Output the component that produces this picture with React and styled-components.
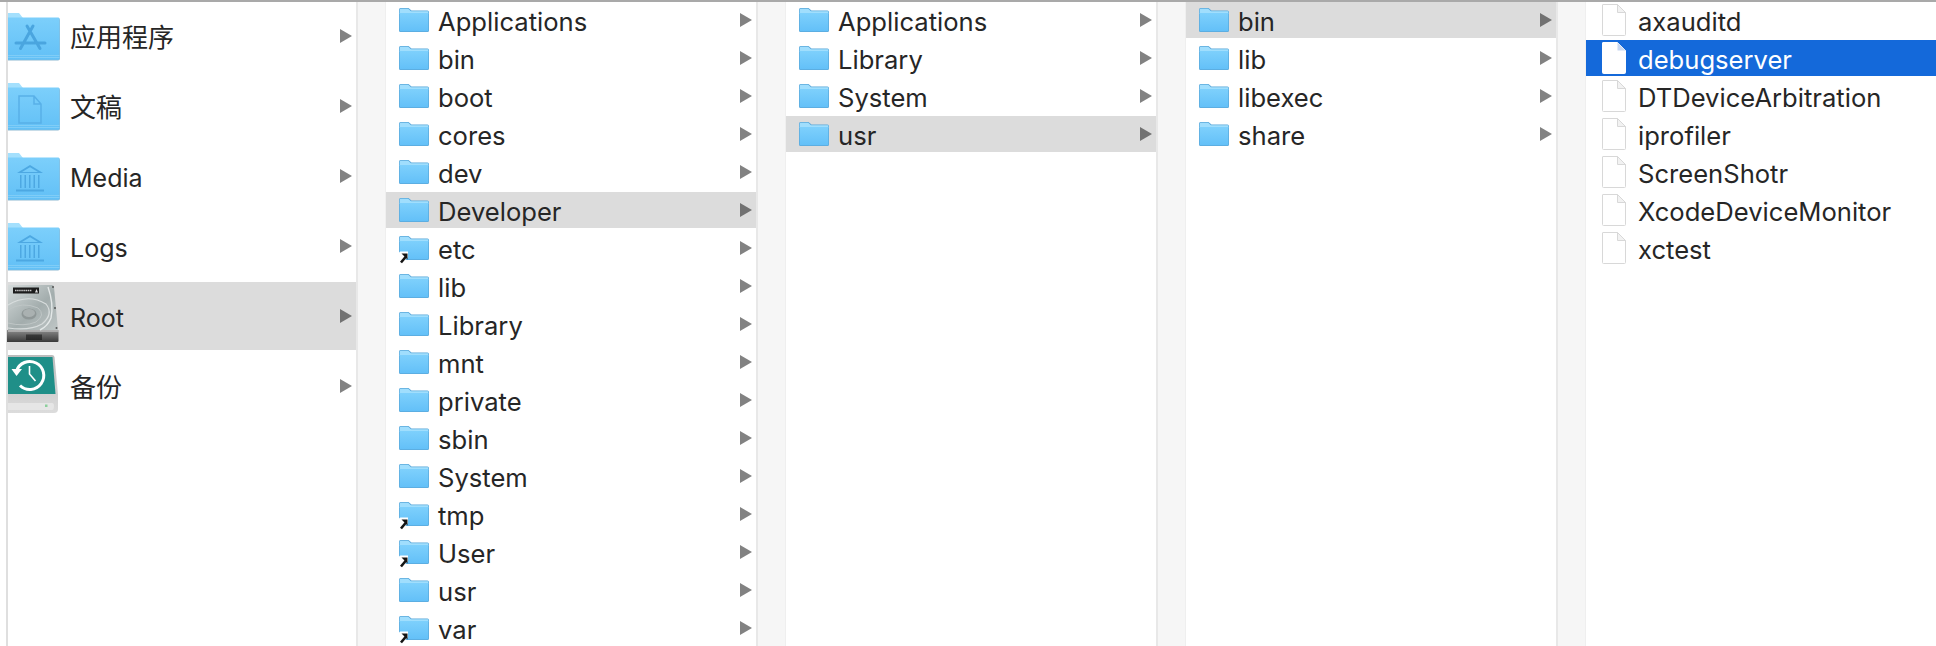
import React from 'react'
import styled, { createGlobalStyle } from 'styled-components'

const GlobalStyle = createGlobalStyle`
  html, body {
    margin: 0;
    padding: 0;
    background: #fff;
  }
`

const Browser = styled.div`
  display: flex;
  height: 644px;
  overflow: hidden;
  border-top: 2px solid #a9a9a9;
  font-family: Inter, "Noto Sans CJK SC", sans-serif;
  color: #262626;
`

const Gutter = styled.div`
  flex: none;
  box-sizing: border-box;
  width: ${(p) => (p.$edge ? 8 : 30)}px;
  background: ${(p) => (p.$edge ? '#fff' : '#f6f6f6')};
  border-left: ${(p) => (p.$edge ? 'none' : '2px solid #e8e8e8')};
  border-right: ${(p) => (p.$edge ? '2px solid #dfdfdf' : '1px solid #efefef')};
`

const Column = styled.div`
  flex: ${(p) => (p.$width ? 'none' : '1')};
  width: ${(p) => (p.$width ? `${p.$width}px` : 'auto')};
  display: flex;
  flex-direction: column;
  gap: 2px;
  background: #fff;
`

const Row = styled.div`
  flex: none;
  display: flex;
  align-items: center;
  height: ${(p) => (p.$large ? 68 : 36)}px;
  padding: ${(p) => (p.$large ? '0 4px 0 0' : '0 4px 0 13px')};
  gap: ${(p) => (p.$large ? 10 : 9)}px;
  background: ${(p) => (p.$state === 'open' ? '#dcdcdc' : p.$state === 'selected' ? '#1469da' : 'transparent')};
  color: ${(p) => (p.$state === 'selected' ? '#fff' : 'inherit')};
`

const Name = styled.span`
  font-size: ${(p) => (p.$cjk ? 26 : p.$large ? 25 : 25.6)}px;
  line-height: 30px;
  padding-top: ${(p) => (p.$large ? 4 : 3)}px;
  white-space: nowrap;
`

const Chevron = styled.i`
  margin-left: auto;
  width: 0;
  height: 0;
  border-left: 12px solid ${(p) => (p.$dark ? '#727272' : '#828282')};
  border-top: 7px solid transparent;
  border-bottom: 7px solid transparent;
`

const IconSvg = styled.svg`
  flex: none;
  display: block;
  overflow: visible;
`

const IconSlot = styled.span`
  flex: none;
  display: flex;
  justify-content: center;
  width: 30px;
`

function Folder({ link }) {
  return (
    <IconSvg width="30" height="24" viewBox="0 0 30 24">
      <defs>
        <linearGradient id="smallFolder" x1="0" y1="0" x2="0" y2="1">
          <stop offset="0" stopColor="#7ed0fc" />
          <stop offset="1" stopColor="#63c0f8" />
        </linearGradient>
      </defs>
      <path d="M0 1.5Q0 0 1.5 0H9.5L12.5 2.5H28.5Q30 2.5 30 4V22.5Q30 24 28.5 24H1.5Q0 24 0 22.5Z" fill="#5aa8da" />
      <path d="M.7 1.5Q.7 .7 1.5 .7H9.2L12 3.2H29.3V6H.7Z" fill="#a0defd" />
      <path d="M.7 5H29.3V22.5Q29.3 23.2 28.5 23.2H1.5Q.7 23.2 .7 22.5Z" fill="url(#smallFolder)" />
      {link && (
        <g>
          <path d="M0 27.500V17Q0 15.500 1.500 15.500H9V21L3 27.500Z" fill="#fff" />
          <path d="M2 26.500L7 20.500" stroke="#141414" strokeWidth="2.600" fill="none" />
          <path d="M2.500 17.500H8.500V23.500Z" fill="#141414" />
        </g>
      )}
    </IconSvg>
  )
}

function BigFolder({ children }) {
  return (
    <IconSvg width="52" height="48" viewBox="0 0 52 48">
      <defs>
        <linearGradient id="bigFolder" x1="0" y1="0" x2="0" y2="1">
          <stop offset="0" stopColor="#7ccffb" />
          <stop offset="1" stopColor="#62c0f6" />
        </linearGradient>
      </defs>
      <path d="M0 1H11L15 6H0Z" fill="#a4e0fd" />
      <path d="M0 6H50Q52 6 52 8V46.500Q52 48.500 50 48.500H0Z" fill="#8fb9d2" />
      <path d="M0 5.500H50.500Q51.500 5.500 51.500 7V47Q51.500 47.800 50.500 47.800H0Z" fill="url(#bigFolder)" />
      <path d="M0 43.500H51.500M0 45.500H51.500" stroke="#80cdf7" strokeWidth="1" />
      {children}
    </IconSvg>
  )
}

function AppsGlyph() {
  return (
    <g stroke="#4aa5df" strokeWidth="3" strokeLinecap="round" fill="none">
      <path d="M25 14L12.500 36.500M19 14L32 36.500M8 31H37" />
    </g>
  )
}

function DocGlyph() {
  return <path d="M11 14H26L33 22V41H11Z M26 14V22H33" fill="none" stroke="#58b0e8" strokeWidth="1.5" />
}

function BankGlyph() {
  return (
    <g fill="#4da8e2">
      <path d="M22 13L35 21H9ZM22 15.200L14 20H30Z" fillRule="evenodd" />
      <path d="M12 23h1.500v13H12ZM16.500 23H18v13h-1.500ZM21 23h1.500v13H21ZM25.500 23H27v13h-1.500ZM30 23h1.500v13H30Z" />
      <rect x="8" y="37.500" width="28" height="2" />
    </g>
  )
}

function DiskIcon() {
  return (
    <IconSvg width="52" height="64" viewBox="0 0 52 64">
      <defs>
        <linearGradient id="diskPlate" x1="0" y1="0" x2="1" y2="1">
          <stop offset="0" stopColor="#d5dbdb" />
          <stop offset=".55" stopColor="#a3adad" />
          <stop offset="1" stopColor="#bfc6c6" />
        </linearGradient>
        <linearGradient id="diskBase" x1="0" y1="0" x2="0" y2="1">
          <stop offset="0" stopColor="#8a8a8a" />
          <stop offset="1" stopColor="#3a3a3a" />
        </linearGradient>
      </defs>
      <path d="M0 1H44Q45.500 1 46 3L50 46H0Z" fill="url(#diskPlate)" />
      <path d="M-1 46H50.500V57Q50.500 58 49.500 58H-1Z" fill="url(#diskBase)" />
      <path d="M0 47H50.500" stroke="#d6d6d6" strokeWidth="1" />
      <rect x="5" y="3.500" width="26" height="6" fill="#1c1c1c" />
      <path d="M7 6.500H24" stroke="#c8c8c8" strokeWidth="1.600" strokeDasharray="1.500 .6" />
      <path d="M27 8.500L28.500 5L30 8.500Z" fill="#dcdcdc" />
      <path d="M0 21Q20 9 38 20Q46 30 34 40Q22 47 0 44" fill="none" stroke="#d8dddd" strokeWidth="1.200" />
      <path d="M0 26Q14 17 30 24Q38 31 28 38Q16 43 0 39" fill="none" stroke="#bfc6c6" strokeWidth="1" />
      <ellipse cx="21" cy="30" rx="7.500" ry="5.500" fill="#8f9797" />
      <ellipse cx="21" cy="29" rx="6" ry="4" fill="#aab1b1" />
      <path d="M40 3Q46 20 43 34Q40 42 32 46" fill="none" stroke="#e4e8e8" strokeWidth="1.400" />
      <circle cx="45" cy="3" r="1" fill="#555" />
      <circle cx="47" cy="24" r="1" fill="#555" />
      <circle cx="48.500" cy="44" r="1" fill="#555" />
      <path d="M19 50.500V56M21 50.500V56M23 50.500V56M25 50.500V56M27 50.500V56M29 50.500V56M31 50.500V56M33 50.500V56" stroke="#111" strokeWidth="1.100" />
    </IconSvg>
  )
}

function BackupIcon() {
  return (
    <IconSvg width="52" height="64" viewBox="0 0 52 64">
      <defs>
        <linearGradient id="backupBody" x1="0" y1="0" x2="0" y2="1">
          <stop offset="0" stopColor="#bcbcbc" />
          <stop offset="1" stopColor="#dcdcdc" />
        </linearGradient>
      </defs>
      <path d="M0 1H44Q46 1 46.500 3L50 40V55Q50 59 46 59H0Z" fill="url(#backupBody)" />
      <path d="M0 3H44.500L47.500 40H0Z" fill="#1f8f88" />
      <path d="M0 49H44Q46 49 46 52Q46 56 44 56H0Z" fill="#e6e6e6" />
      <rect x="37" y="50.500" width="2.500" height="2.500" fill="#8ccf9c" />
      <path d="M8.500 17A14 14 0 1 1 12 31.500" fill="none" stroke="#fff" strokeWidth="3" />
      <path d="M3.500 15L14 15L8.500 22Z" fill="#fff" />
      <path d="M21.500 12V20L27.500 27" fill="none" stroke="#fff" strokeWidth="1.600" />
    </IconSvg>
  )
}

function FileIcon({ selected }) {
  return (
    <IconSvg width="24" height="32" viewBox="0 0 24 32">
      <path
        d="M1 .5H15.500L23.500 8.500V30.500Q23.500 31.500 22.500 31.500H1.500Q.5 31.500 .5 30.500V1Q.5 .5 1 .5Z"
        fill="#fff"
        stroke={selected ? '#fff' : '#d8d8d8'}
      />
      <path d="M15.500 .5V8.500H23.500Z" fill={selected ? '#c8d8f2' : '#f2f2f2'} stroke={selected ? 'none' : '#d8d8d8'} />
    </IconSvg>
  )
}

const places = [
  { name: '应用程序', glyph: <AppsGlyph />, cjk: true },
  { name: '文稿', glyph: <DocGlyph />, cjk: true },
  { name: 'Media', glyph: <BankGlyph /> },
  { name: 'Logs', glyph: <BankGlyph /> },
  { name: 'Root', icon: <DiskIcon />, open: true },
  { name: '备份', icon: <BackupIcon />, cjk: true },
]

const rootItems = [
  ['Applications'], ['bin'], ['boot'], ['cores'], ['dev'], ['Developer', 'open'], ['etc', null, true],
  ['lib'], ['Library'], ['mnt'], ['private'], ['sbin'], ['System'], ['tmp', null, true], ['User', null, true],
  ['usr'], ['var', null, true],
]

const folderColumns = [
  rootItems,
  [['Applications'], ['Library'], ['System'], ['usr', 'open']],
  [['bin', 'open'], ['lib'], ['libexec'], ['share']],
]

const files = ['axauditd', 'debugserver', 'DTDeviceArbitration', 'iprofiler', 'ScreenShotr', 'XcodeDeviceMonitor', 'xctest']

export default function App() {
  return (
    <>
      <GlobalStyle />
      <Browser>
        <Gutter $edge />
        <Column $width={348}>
          {places.map((p) => (
            <Row key={p.name} $large $state={p.open ? 'open' : undefined}>
              {p.icon || <BigFolder>{p.glyph}</BigFolder>}
              <Name $large $cjk={p.cjk}>{p.name}</Name>
              <Chevron $dark={p.open} />
            </Row>
          ))}
        </Column>
        {folderColumns.map((items, i) => (
          <React.Fragment key={i}>
            <Gutter />
            <Column $width={370}>
              {items.map(([name, state, link]) => (
                <Row key={name} $state={state}>
                  <Folder link={link} />
                  <Name>{name}</Name>
                  <Chevron $dark={state === 'open'} />
                </Row>
              ))}
            </Column>
          </React.Fragment>
        ))}
        <Gutter />
        <Column>
          {files.map((name) => {
            const selected = name === 'debugserver'
            return (
              <Row key={name} $state={selected ? 'selected' : undefined}>
                <IconSlot>
                  <FileIcon selected={selected} />
                </IconSlot>
                <Name>{name}</Name>
              </Row>
            )
          })}
        </Column>
      </Browser>
    </>
  )
}
